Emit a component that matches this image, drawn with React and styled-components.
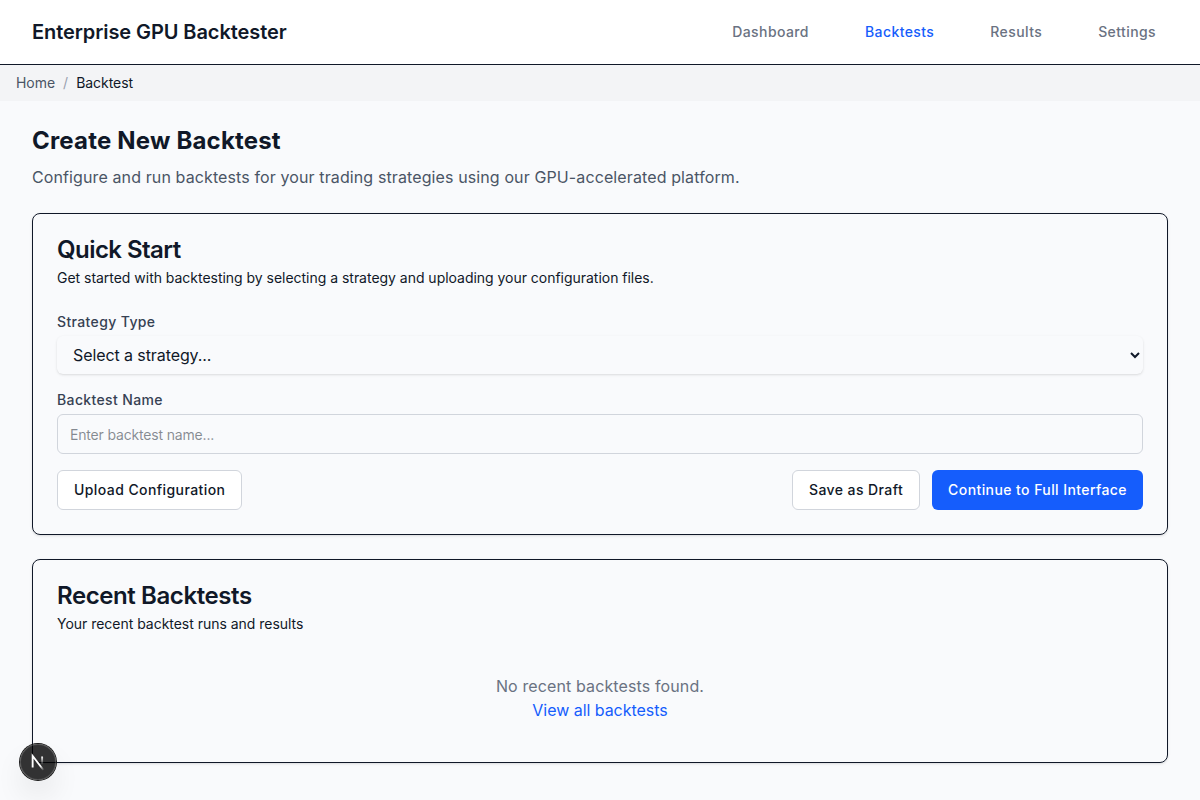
import React from "react";
import styled, { createGlobalStyle } from "styled-components";

const GlobalStyle = createGlobalStyle`
  *, *::before, *::after { box-sizing: border-box; }
  body {
    margin: 0;
    background: #f9fafb;
    color: #101828;
    font-family: Inter, "Liberation Sans", sans-serif;
    font-size: 16px;
    line-height: 24px;
  }
  h1, h2, p { margin: 0; }
  a { color: inherit; text-decoration: none; }
`;

const Page = styled.div`
  min-height: 100vh;
  background: #f9fafc;
`;

const Header = styled.header`
  display: flex;
  align-items: center;
  justify-content: space-between;
  height: 65px;
  padding: 0 32px;
  background: #fff;
  border-bottom: 1px solid #101828;
`;

const Brand = styled.div`
  font-size: 20px;
  line-height: 28px;
  font-weight: 600;
  letter-spacing: -0.08px;
`;

const Nav = styled.nav`
  display: flex;
  gap: 32px;
`;

const NavLink = styled.a`
  padding: 8px 12px;
  font-size: 14px;
  line-height: 20px;
  font-weight: 500;
  letter-spacing: 0.41px;
  color: ${(p) => (p.$active ? "#155dfc" : "#6a7282")};
`;

const Breadcrumb = styled.div`
  display: flex;
  gap: 8px;
  padding: 8px 16px;
  background: #f3f4f6;
  font-size: 14px;
  line-height: 20px;
  letter-spacing: -0.03px;
`;

const Crumb = styled.span`
  color: ${(p) => p.$color};
`;

const Main = styled.main`
  display: flex;
  flex-direction: column;
  gap: 24px;
  padding: 24px 32px;
`;

const Intro = styled.div`
  display: flex;
  flex-direction: column;
  gap: 8px;
`;

const PageTitle = styled.h1`
  font-size: 24px;
  line-height: 32px;
  font-weight: 700;
  letter-spacing: 0.19px;
`;

const Lead = styled.p`
  color: #4a5565;
  letter-spacing: 0.113px;
`;

const Card = styled.section`
  display: flex;
  flex-direction: column;
  gap: 24px;
  padding: 24px;
  border: 1px solid #101828;
  border-radius: 8px;
  box-shadow: 0 1px 3px rgba(0, 0, 0, 0.1), 0 1px 2px -1px rgba(0, 0, 0, 0.1);
`;

const CardHeader = styled.div`
  display: flex;
  flex-direction: column;
  gap: 6px;
`;

const CardTitle = styled.h2`
  font-size: 24px;
  line-height: 24px;
  font-weight: 600;
  letter-spacing: ${(p) => p.$tracking};
`;

const CardText = styled.p`
  font-size: 14px;
  line-height: 20px;
  letter-spacing: -0.025px;
`;

const Form = styled.div`
  display: flex;
  flex-direction: column;
  gap: 16px;
`;

const Field = styled.label`
  display: flex;
  flex-direction: column;
  gap: 4px;
`;

const Label = styled.span`
  font-size: 14px;
  line-height: 20px;
  font-weight: 500;
  letter-spacing: 0.37px;
  color: #364153;
`;

const Select = styled.select`
  width: 100%;
  height: 38px;
  padding: 8px 12px;
  border: 0;
  border-radius: 6px;
  background-color: transparent;
  color: #101828;
  font: inherit;
  letter-spacing: -0.09px;
  box-shadow: 0 1px 3px rgba(0, 0, 0, 0.1), 0 1px 2px -1px rgba(0, 0, 0, 0.1);
`;

const Input = styled.input`
  width: 100%;
  height: 40px;
  padding: 8px 12px;
  border: 1px solid #d1d5dc;
  border-radius: 6px;
  background: transparent;
  font-family: inherit;
  font-size: 14px;
  line-height: 20px;
  letter-spacing: -0.17px;
  &::placeholder { color: rgba(16, 24, 40, 0.5); }
`;

const Actions = styled.div`
  display: flex;
  justify-content: space-between;
`;

const ActionGroup = styled.div`
  display: flex;
  gap: 12px;
`;

const Button = styled.button`
  height: 40px;
  padding: ${(p) => (p.$primary ? "8px 16px" : "7px 16px")};
  border: ${(p) => (p.$primary ? "0" : "1px solid #d1d5dc")};
  border-radius: 6px;
  background: ${(p) => (p.$primary ? "#155dfc" : "#fff")};
  color: ${(p) => (p.$primary ? "#fff" : "#101828")};
  font-family: inherit;
  font-size: 14px;
  line-height: 20px;
  font-weight: 500;
  letter-spacing: 0.415px;
  white-space: nowrap;
`;

const Empty = styled.div`
  display: flex;
  flex-direction: column;
  align-items: center;
  padding: 16px 0;
  color: #6a7282;
  letter-spacing: 0.12px;
`;

const EmptyLink = styled.a`
  color: #155dfc;
  letter-spacing: -0.04px;
`;

const DevBadge = styled.div`
  position: fixed;
  left: 20px;
  bottom: 20px;
  width: 36px;
  height: 36px;
  border-radius: 50%;
  background: rgba(0, 0, 0, 0.8);
  box-shadow: 0 0 0 1px #171717, inset 0 0 0 1px rgba(255, 255, 255, 0.14),
    0 16px 32px -8px rgba(0, 0, 0, 0.24);
  svg { display: block; }
`;

function NextMark() {
  return (
    <svg width="36" height="36" viewBox="0 0 36 36" fill="none">
      <defs>
        <linearGradient id="diagonal" x1="9.95" y1="11.16" x2="15.49" y2="18.03" gradientUnits="userSpaceOnUse">
          <stop stopColor="white" />
          <stop offset="0.6" stopColor="white" stopOpacity="0" />
          <stop offset="1" stopColor="white" stopOpacity="0" />
        </linearGradient>
        <linearGradient id="stem" x1="11.82" y1="1.4" x2="11.79" y2="9.66" gradientUnits="userSpaceOnUse">
          <stop stopColor="white" />
          <stop offset="1" stopColor="white" stopOpacity="0" />
        </linearGradient>
      </defs>
      <g transform="translate(10.3 11)" strokeWidth="1.86">
        <path d="M13.3 15.2L2.34 1V12.6" stroke="url(#diagonal)" />
        <path d="M11.825 1.5V13.1" stroke="url(#stem)" />
      </g>
    </svg>
  );
}

const links = ["Dashboard", "Backtests", "Results", "Settings"];

export default function App() {
  return (
    <Page>
      <GlobalStyle />
      <Header>
        <Brand>Enterprise GPU Backtester</Brand>
        <Nav>
          {links.map((name) => (
            <NavLink key={name} href="#" $active={name === "Backtests"}>
              {name}
            </NavLink>
          ))}
        </Nav>
      </Header>
      <Breadcrumb>
        <Crumb $color="#4a5565">Home</Crumb>
        <Crumb $color="#99a1af">/</Crumb>
        <Crumb $color="#101828">Backtest</Crumb>
      </Breadcrumb>
      <Main>
        <Intro>
          <PageTitle>Create New Backtest</PageTitle>
          <Lead>Configure and run backtests for your trading strategies using our GPU-accelerated platform.</Lead>
        </Intro>
        <Card>
          <CardHeader>
            <CardTitle $tracking="-0.55px">Quick Start</CardTitle>
            <CardText>Get started with backtesting by selecting a strategy and uploading your configuration files.</CardText>
          </CardHeader>
          <Form>
            <Field>
              <Label>Strategy Type</Label>
              <Select>
                <option>Select a strategy...</option>
              </Select>
            </Field>
            <Field>
              <Label>Backtest Name</Label>
              <Input placeholder="Enter backtest name..." />
            </Field>
            <Actions>
              <Button>Upload Configuration</Button>
              <ActionGroup>
                <Button>Save as Draft</Button>
                <Button $primary>Continue to Full Interface</Button>
              </ActionGroup>
            </Actions>
          </Form>
        </Card>
        <Card>
          <CardHeader>
            <CardTitle $tracking="-0.41px">Recent Backtests</CardTitle>
            <CardText>Your recent backtest runs and results</CardText>
          </CardHeader>
          <Empty>
            <p>No recent backtests found.</p>
            <EmptyLink href="#">View all backtests</EmptyLink>
          </Empty>
        </Card>
      </Main>
      <DevBadge>
        <NextMark />
      </DevBadge>
    </Page>
  );
}
